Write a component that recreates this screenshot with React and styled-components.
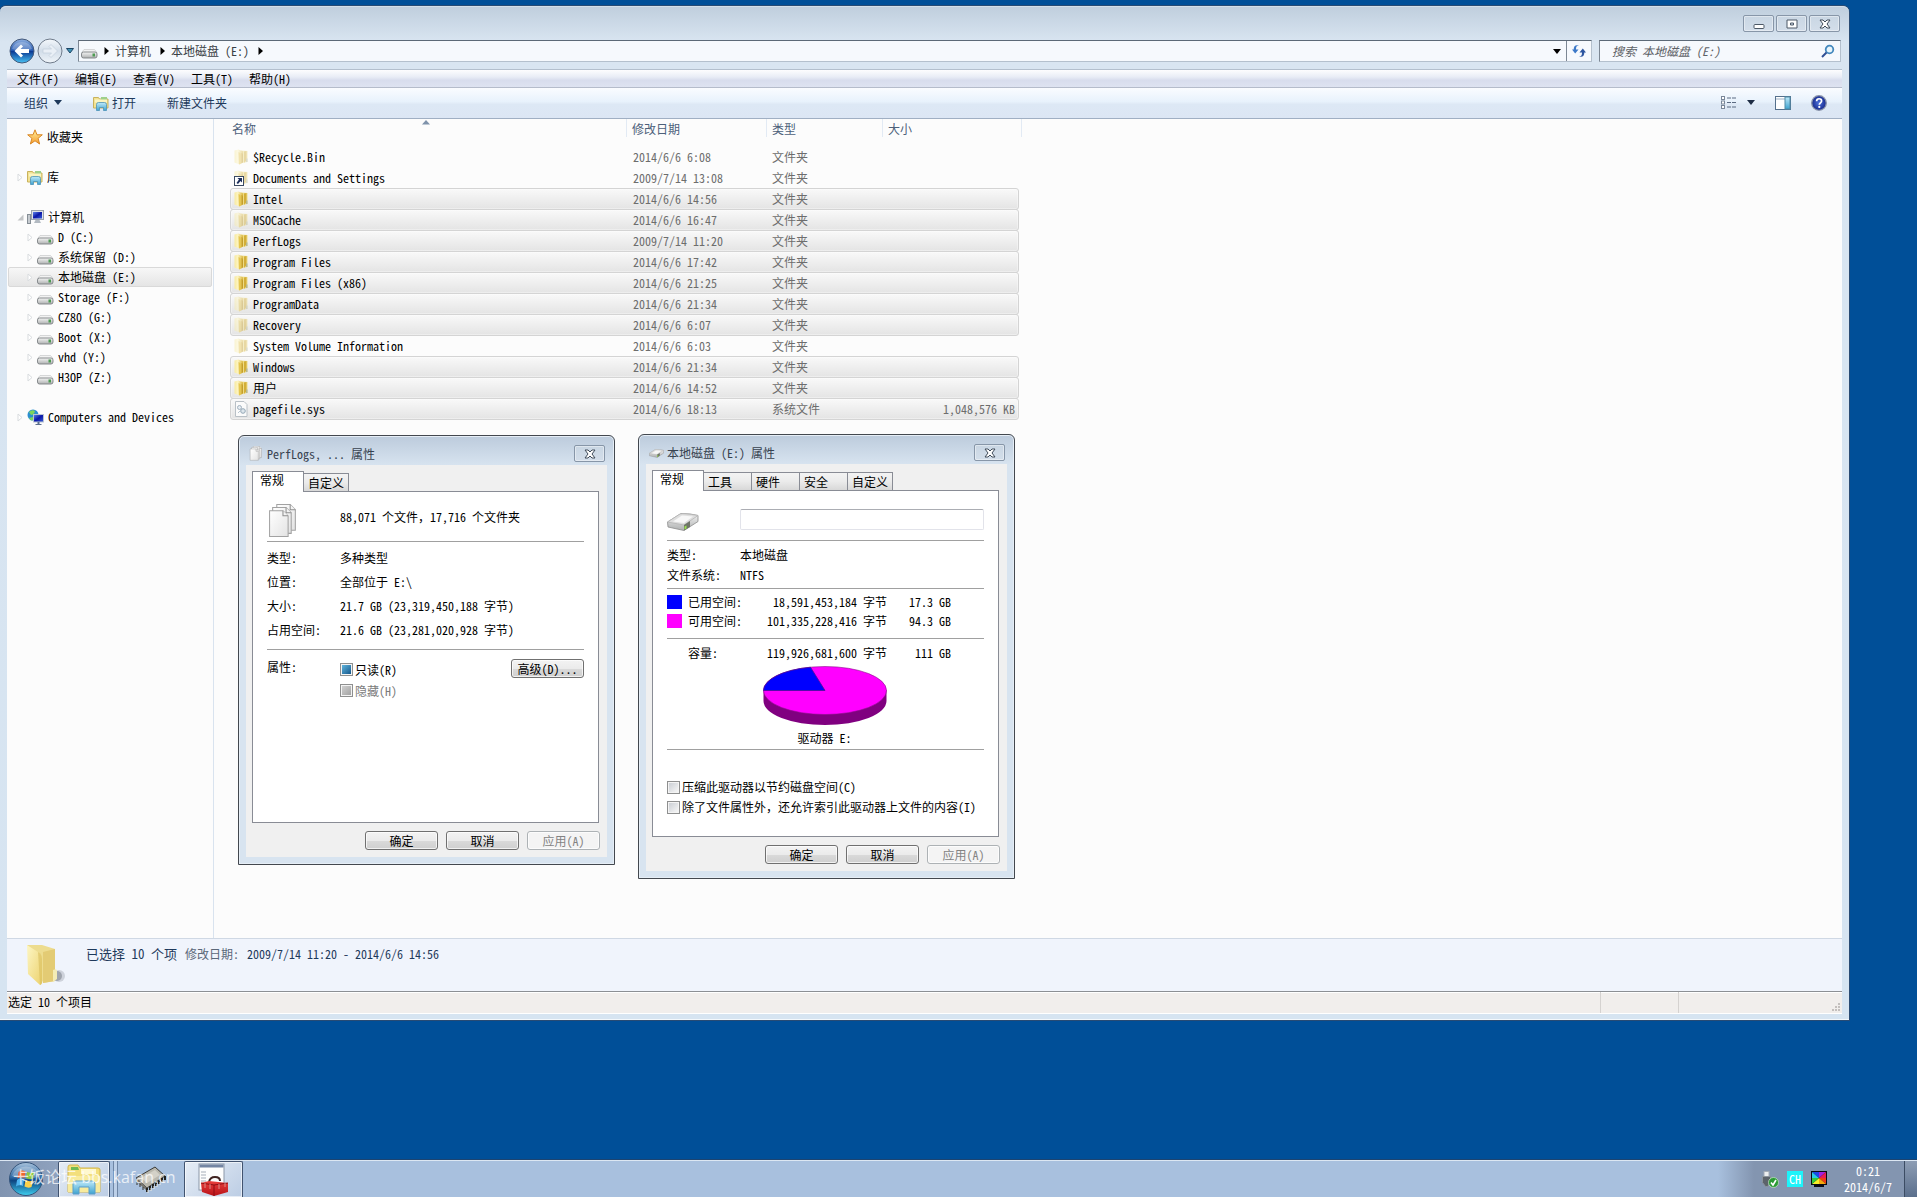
import React from 'react';
import styled, { createGlobalStyle, css } from 'styled-components';

const drives = [
  { name: 'D (C:)' },
  { name: '系统保留 (D:)' },
  { name: '本地磁盘 (E:)', active: true },
  { name: 'Storage (F:)' },
  { name: 'CZ80 (G:)' },
  { name: 'Boot (X:)' },
  { name: 'vhd (Y:)' },
  { name: 'H3OP (Z:)' },
];

const files = [
  { name: '$Recycle.Bin', date: '2014/6/6 6:08', type: '文件夹', icon: 'hidden' },
  { name: 'Documents and Settings', date: '2009/7/14 13:08', type: '文件夹', icon: 'shortcut' },
  { name: 'Intel', date: '2014/6/6 14:56', type: '文件夹', icon: 'folder', selected: true },
  { name: 'MSOCache', date: '2014/6/6 16:47', type: '文件夹', icon: 'hidden', selected: true },
  { name: 'PerfLogs', date: '2009/7/14 11:20', type: '文件夹', icon: 'folder', selected: true },
  { name: 'Program Files', date: '2014/6/6 17:42', type: '文件夹', icon: 'folder', selected: true },
  { name: 'Program Files (x86)', date: '2014/6/6 21:25', type: '文件夹', icon: 'folder', selected: true },
  { name: 'ProgramData', date: '2014/6/6 21:34', type: '文件夹', icon: 'hidden', selected: true },
  { name: 'Recovery', date: '2014/6/6 6:07', type: '文件夹', icon: 'hidden', selected: true },
  { name: 'System Volume Information', date: '2014/6/6 6:03', type: '文件夹', icon: 'hidden' },
  { name: 'Windows', date: '2014/6/6 21:34', type: '文件夹', icon: 'folder', selected: true },
  { name: '用户', date: '2014/6/6 14:52', type: '文件夹', icon: 'folder', selected: true },
  { name: 'pagefile.sys', date: '2014/6/6 18:13', type: '系统文件', size: '1,048,576 KB', icon: 'file', selected: true },
];

function App() {
  return (
    <Desktop>
      <GlobalStyle />
      <Gradients />
      <Explorer>
        <TitleBar>
          <CaptionButton aria-label="最小化"><MinimizeIcon /></CaptionButton>
          <CaptionButton aria-label="最大化"><MaximizeIcon /></CaptionButton>
          <CaptionButton aria-label="关闭"><CloseIcon /></CaptionButton>
        </TitleBar>
        <NavRow>
          <RoundButton aria-label="后退"><BackIcon /></RoundButton>
          <RoundButton aria-label="前进"><ForwardIcon /></RoundButton>
          <HistoryButton aria-label="最近浏览的位置">
            <svg width="8" height="6" viewBox="0 0 8 6"><path d="M0.5 0.5h7L4 5z" fill="#3f93b5" stroke="#1d4566" /></svg>
          </HistoryButton>
          <AddressBar>
            <DriveIcon low />
            <Crumbs>
              <ArrowRight />
              <Crumb>计算机</Crumb>
              <ArrowRight />
              <Crumb>本地磁盘 (E:)</Crumb>
              <ArrowRight />
            </Crumbs>
            <AddressButton aria-label="历史"><ArrowDown /></AddressButton>
            <AddressButton $divided aria-label="刷新"><RefreshIcon /></AddressButton>
          </AddressBar>
          <SearchBox>
            <SearchInput aria-label="搜索" placeholder="搜索 本地磁盘 (E:)" />
            <SearchIcon />
          </SearchBox>
        </NavRow>
        <MenuBar>
          <MenuItem>文件(F)</MenuItem>
          <MenuItem>编辑(E)</MenuItem>
          <MenuItem>查看(V)</MenuItem>
          <MenuItem>工具(T)</MenuItem>
          <MenuItem>帮助(H)</MenuItem>
        </MenuBar>
        <Toolbar>
          <ToolButton>组织<ArrowDown color="#1e395b" /></ToolButton>
          <ToolButton $tight><LibraryIcon />打开</ToolButton>
          <ToolButton>新建文件夹</ToolButton>
          <ToolSpacer />
          <IconButton aria-label="更改您的视图"><ViewsIcon /></IconButton>
          <IconButton aria-label="更多选项"><ArrowDown color="#1e2d45" /></IconButton>
          <IconButton $wide aria-label="显示预览窗格"><PreviewIcon /></IconButton>
          <IconButton $wide aria-label="获取帮助"><HelpIcon /></IconButton>
        </Toolbar>
        <Body>
          <Sidebar>
            <TreeGroup>
              <TreeItem><Expander /><StarIcon />收藏夹</TreeItem>
            </TreeGroup>
            <TreeGroup>
              <TreeItem><Expander><ClosedMark /></Expander><LibraryIcon />库</TreeItem>
            </TreeGroup>
            <TreeGroup>
              <TreeItem><Expander><OpenMark /></Expander><ComputerIcon />计算机</TreeItem>
              {drives.map((drive) => (
                <TreeItem key={drive.name} $child $active={drive.active}>
                  <Expander><ClosedMark /></Expander><DriveIcon low />{drive.name}
                </TreeItem>
              ))}
            </TreeGroup>
            <TreeGroup>
              <TreeItem><Expander><ClosedMark /></Expander><NetworkIcon />Computers and Devices</TreeItem>
            </TreeGroup>
          </Sidebar>
          <FilePane>
            <FileTable>
              <thead>
                <HeadRow>
                  <HeadCell $first>名称<SortMark><svg width="8" height="5" viewBox="0 0 8 5"><path d="M4 0l4 4.5H0z" fill="#7f93ab" /></svg></SortMark></HeadCell>
                  <HeadCell>修改日期</HeadCell>
                  <HeadCell>类型</HeadCell>
                  <HeadCell>大小</HeadCell>
                </HeadRow>
              </thead>
              <tbody>
                {files.map((file) => (
                  <FileRow key={file.name} $selected={file.selected}>
                    <NameCell><FileIcon kind={file.icon} />{file.name}</NameCell>
                    <Cell>{file.date}</Cell>
                    <Cell>{file.type}</Cell>
                    <SizeCell>{file.size}</SizeCell>
                  </FileRow>
                ))}
              </tbody>
            </FileTable>
          </FilePane>
        </Body>
        <DetailsPane>
          <BigFolderIcon />
          <Details>
            <Selected>已选择 10 个项</Selected>
            <Muted>修改日期:</Muted>
            <span>2009/7/14 11:20 - 2014/6/6 14:56</span>
          </Details>
        </DetailsPane>
        <StatusBar>
          <StatusText>选定 10 个项目</StatusText>
          <StatusCell $width="78px" />
          <StatusCell $width="164px"><GripIcon /></StatusCell>
        </StatusBar>
      </Explorer>
      <FolderProperties />
      <DriveProperties />
      <Taskbar />
    </Desktop>
  );
}

function Dialog({ left, top, icon, title, tabs, minHeight, children }) {
  return (
    <DialogFrame $left={left} $top={top}>
      <DialogTitle>
        {icon}
        <span>{title}</span>
        <CaptionButton aria-label="关闭"><CloseIcon /></CaptionButton>
      </DialogTitle>
      <Client>
        <Tabs>
          {tabs.map((tab, i) => <Tab key={tab} $active={i === 0}>{tab}</Tab>)}
        </Tabs>
        <Panel $minHeight={minHeight}>{children}</Panel>
        <DialogFooter>
          <Button>确定</Button>
          <Button>取消</Button>
          <Button disabled>应用(A)</Button>
        </DialogFooter>
      </Client>
    </DialogFrame>
  );
}

function FolderProperties() {
  return (
    <Dialog left="238px" top="435px" icon={<PagesIcon size={15} />} title="PerfLogs, ... 属性" tabs={['常规', '自定义']} minHeight="332px">
      <Head>
        <LabelCol $icon><PagesIcon size={34} /></LabelCol>
        <span>88,071 个文件，17,716 个文件夹</span>
      </Head>
      <Divider $after="4px" />
      <Field $height="24px"><LabelCol>类型:</LabelCol>多种类型</Field>
      <Field $height="24px"><LabelCol>位置:</LabelCol>全部位于 E:\</Field>
      <Field $height="24px"><LabelCol>大小:</LabelCol>21.7 GB (23,319,450,188 字节)</Field>
      <Field $height="24px"><LabelCol>占用空间:</LabelCol>21.6 GB (23,281,020,928 字节)</Field>
      <Divider $before="7px" $after="9px" />
      <Attributes>
        <LabelCol>属性:</LabelCol>
        <Checks>
          <CheckLabel><CheckBox $fill="blue" defaultChecked />只读(R)</CheckLabel>
          <CheckLabel $disabled><CheckBox $fill="grey" disabled defaultChecked />隐藏(H)</CheckLabel>
        </Checks>
        <Button>高级(D)...</Button>
      </Attributes>
    </Dialog>
  );
}

function DriveProperties() {
  return (
    <Dialog left="638px" top="434px" icon={<BigDriveIcon size={15} />} title="本地磁盘 (E:) 属性" tabs={['常规', '工具', '硬件', '安全', '自定义']} minHeight="347px">
      <Head>
        <LabelCol $icon><BigDriveIcon size={32} /></LabelCol>
        <VolumeName aria-label="卷标" />
      </Head>
      <Divider $after="4px" />
      <Field $height="20px"><LabelCol>类型:</LabelCol>本地磁盘</Field>
      <Field $height="20px"><LabelCol>文件系统:</LabelCol>NTFS</Field>
      <Divider $before="3px" $after="3px" />
      <Usage>
        <Swatch $color="#0000ff" /><span>已用空间:</span><Amount>18,591,453,184 字节</Amount><Amount>17.3 GB</Amount>
      </Usage>
      <Usage>
        <Swatch $color="#ff00ff" /><span>可用空间:</span><Amount>101,335,228,416 字节</Amount><Amount>94.3 GB</Amount>
      </Usage>
      <Divider $before="8px" $after="4px" />
      <Usage>
        <span /><span>容量:</span><Amount>119,926,681,600 字节</Amount><Amount>111 GB</Amount>
      </Usage>
      <Chart>
        <svg width="124" height="60" viewBox="0 0 124 60">
          <path d="M0.5 24v11a61.5 24 0 0 0 123 0V24z" fill="#800080" />
          <ellipse cx="62" cy="24.5" rx="61.5" ry="24" fill="#ff00ff" stroke="#8a108a" strokeWidth="0.6" />
          <path d="M62 24.5H0.5A61.5 24 0 0 1 47.5 1.2z" fill="#0000ff" stroke="#4b1093" strokeWidth="0.8" />
        </svg>
        <span>驱动器 E:</span>
      </Chart>
      <Divider $before="3px" $after="27px" />
      <CheckLabel $short><CheckBox />压缩此驱动器以节约磁盘空间(C)</CheckLabel>
      <CheckLabel $short><CheckBox />除了文件属性外，还允许索引此驱动器上文件的内容(I)</CheckLabel>
    </Dialog>
  );
}

function Taskbar() {
  return (
    <Bar>
      <StartButton aria-label="开始"><StartIcon /></StartButton>
      <TaskButton $active $width="52px" aria-label="Windows 资源管理器"><TaskExplorerIcon /></TaskButton>
      <TaskDivider />
      <TaskButton $width="66px" aria-label="内存工具"><ChipIcon /></TaskButton>
      <TaskButton $active $width="59px" aria-label="工具箱"><ToolboxIcon /></TaskButton>
      <Tray>
        <UsbIcon />
        <InputLang>CH</InputLang>
        <ColorIcon />
        <Clock>
          <span>0:21</span>
          <span>2014/6/7</span>
        </Clock>
        <ShowDesktop aria-label="显示桌面" />
      </Tray>
      <Watermark>卡饭论坛 bbs.kafan.cn</Watermark>
    </Bar>
  );
}

/* icons */

// shared fills, referenced by id from the icons below
const Gradients = () => (
  <Defs width="0" height="0" aria-hidden="true">
    <defs>
      <linearGradient id="gFolder" x1="0" x2="1"><stop offset="0" stopColor="#f7e9a0" /><stop offset="0.4" stopColor="#fdf5c2" /><stop offset="1" stopColor="#d9b53c" /></linearGradient>
      <linearGradient id="gFolderBig" x1="0" x2="1" y2="1"><stop offset="0" stopColor="#fdf6c4" /><stop offset="1" stopColor="#ecd26e" /></linearGradient>
      <linearGradient id="gMetal" x2="0" y2="1"><stop offset="0" stopColor="#f5f5f5" /><stop offset="1" stopColor="#aeb0b0" /></linearGradient>
      <linearGradient id="gPage" x1="0" x2="1" y2="1"><stop offset="0" stopColor="#ffffff" /><stop offset="1" stopColor="#e3e3e3" /></linearGradient>
      <linearGradient id="gScreen" x1="0" x2="1" y2="1"><stop offset="0" stopColor="#5f86ea" /><stop offset="0.5" stopColor="#0a16a8" /><stop offset="1" stopColor="#3a5fd6" /></linearGradient>
      <linearGradient id="gStar" x2="0" y2="1"><stop offset="0" stopColor="#fff3a0" /><stop offset="1" stopColor="#f59a2c" /></linearGradient>
      <linearGradient id="gTeal" x2="0" y2="1"><stop offset="0" stopColor="#bfeafa" /><stop offset="1" stopColor="#3fa3cf" /></linearGradient>
      <linearGradient id="gBack" x2="0" y2="1"><stop offset="0" stopColor="#8fb0e0" /><stop offset="0.48" stopColor="#2458b0" /><stop offset="0.52" stopColor="#0b3a94" /><stop offset="1" stopColor="#49c3f5" /></linearGradient>
      <linearGradient id="gForward" x2="0" y2="1"><stop offset="0" stopColor="#f4f8fc" /><stop offset="0.5" stopColor="#d2dde9" /><stop offset="1" stopColor="#f0f5fa" /></linearGradient>
      <radialGradient id="gHelp"><stop offset="0" stopColor="#4e72dc" /><stop offset="1" stopColor="#16298c" /></radialGradient>
      <linearGradient id="gOrb" x2="0" y2="1"><stop offset="0" stopColor="#a9c3dc" /><stop offset="0.45" stopColor="#2f6aa5" /><stop offset="0.55" stopColor="#0d4480" /><stop offset="1" stopColor="#3fd0f0" /></linearGradient>
      <linearGradient id="gRed" x2="0" y2="1"><stop offset="0" stopColor="#e8403c" /><stop offset="1" stopColor="#b81218" /></linearGradient>
    </defs>
  </Defs>
);

const ArrowRight = () => <svg width="5" height="8" viewBox="0 0 5 8"><path d="M0.5 0L5 4L0.5 8z" fill="#000" /></svg>;
const ArrowDown = ({ color = '#000' }) => <svg width="8" height="5" viewBox="0 0 8 5"><path d="M0 0h8L4 5z" fill={color} /></svg>;
const ClosedMark = () => <svg width="6" height="9" viewBox="0 0 6 9"><path d="M1 1l4 3.5L1 8z" fill="#fff" stroke="#d9dcdf" /></svg>;
const OpenMark = () => <svg width="7" height="7" viewBox="0 0 7 7"><path d="M6.5 0.5v6h-6z" fill="#c4c6c8" /></svg>;

const MinimizeIcon = () => <svg width="12" height="12" viewBox="0 0 12 12"><rect x="1" y="6.5" width="10" height="4" rx="1" fill="#fff" stroke="#4d5967" /></svg>;
const MaximizeIcon = () => <svg width="12" height="12" viewBox="0 0 12 12"><path fillRule="evenodd" d="M1 2h10v8H1zM4.5 5h3v2h-3z" fill="#fff" stroke="#4d5967" /></svg>;
const CloseIcon = () => <svg width="12" height="12" viewBox="0 0 12 12"><path d="M1 2h3l2 2l2-2h3L8 6l3 4H8L6 8l-2 2H1l3-4z" fill="#fff" stroke="#404c5a" strokeLinejoin="round" /></svg>;

const BackIcon = () => (
  <svg width="26" height="26" viewBox="0 0 26 26">
    <circle cx="13" cy="13" r="12" fill="url(#gBack)" stroke="#44597a" />
    <path d="M3 11a10.5 10 0 0 1 20 0c-6 2-14 2-20 0z" fill="#fff" opacity="0.25" />
    <path d="M5.500 13l6.500-6.500l2 2L11.500 11H20v4h-8.500l2.500 2.500l-2 2z" fill="#fff" />
  </svg>
);
const ForwardIcon = () => (
  <svg width="26" height="26" viewBox="0 0 26 26">
    <circle cx="13" cy="13" r="12" fill="url(#gForward)" stroke="#6f7b8b" />
    <path d="M20.5 13L14 6.5l-2 2l2.5 2.5H6v4h8.500L12 17.5l2 2z" fill="#e9eff6" stroke="#c3cedb" strokeWidth="0.7" />
  </svg>
);
const RefreshIcon = () => (
  <svg width="14" height="14" viewBox="0 0 14 14">
    <path d="M7 1.5C4.5 1.5 4 3 4 5.5H6.5L3.2 9.5L0 5.5h1.700C1.700 2 3.500 0.5 7 1.5z" fill="#3b78c8" />
    <path d="M7 12.5c2.500 0 3-1.500 3-4H7.500l3.300-4L14 8.500h-1.700c0 3.500-1.800 5-5.300 4z" fill="#2c55a0" />
  </svg>
);
const SearchIcon = () => <svg width="14" height="14" viewBox="0 0 14 14"><circle cx="8.500" cy="5.500" r="3.800" fill="#e8f5fb" stroke="#4388bd" strokeWidth="1.800" /><path d="M5.500 8.500L1 13" stroke="#2f4f94" strokeWidth="2" /></svg>;
const ViewsIcon = () => (
  <svg width="16" height="13" viewBox="0 0 16 13">
    {[0, 4.5, 9].map((y) => <g key={y}><rect x="0.5" y={y + 0.5} width="3" height="3" fill="#fff" stroke="#7a8799" /><path d={`M6 ${y + 2}h4M11 ${y + 2}h4`} stroke="#5b6a82" /></g>)}
  </svg>
);
const PreviewIcon = () => <svg width="16" height="14" viewBox="0 0 16 14"><rect x="0.5" y="0.5" width="15" height="13" fill="#fff" stroke="#55708c" /><path d="M1 3h9" stroke="#9bb0c4" /><rect x="10" y="1" width="5" height="12" fill="url(#gTeal)" stroke="#4e8ca8" /></svg>;
const HelpIcon = () => <svg width="16" height="16" viewBox="0 0 16 16"><circle cx="8" cy="8" r="7.3" fill="url(#gHelp)" stroke="#8a94ab" strokeWidth="1.3" /><path d="M5.600 6.200c0-3.200 5-3.200 5-0.300c0 1.900-2.300 1.900-2.300 3.900" stroke="#fff" strokeWidth="1.7" fill="none" /><circle cx="8.3" cy="11.9" r="1.1" fill="#fff" /></svg>;

const StarIcon = () => <svg width="16" height="16" viewBox="0 0 16 16"><path d="M8 0.8l2 5h5.3l-4.2 3.5l1.5 5.7L8 11.8L3.400 15l1.500-5.700L0.700 5.8H6z" fill="url(#gStar)" stroke="#d98724" strokeLinejoin="round" /></svg>;
const LibraryIcon = () => (
  <svg width="16" height="16" viewBox="0 0 16 16">
    <path d="M0.5 13V2.5h5l1 1.5h8.500v9z" fill="#f2e293" stroke="#c9b25c" />
    <path d="M8 2h6v4H8z" fill="#9fd08a" />
    <path d="M2 4.5h12v3H2z" fill="#fbf4c0" />
    <path d="M3.5 15.5V9.5q0-2 2-2h6q2 0 2 2v6h-3v-3h-4v3z" fill="url(#gTeal)" stroke="#4c93b8" strokeWidth="0.8" />
  </svg>
);
const ComputerIcon = () => (
  <svg width="17" height="16" viewBox="0 0 17 16">
    <rect x="0.5" y="5.5" width="3" height="9" fill="#c6cbd0" stroke="#868e96" />
    <rect x="4.5" y="1.5" width="12" height="9" fill="#dfe3e8" stroke="#9aa3ad" />
    <rect x="6" y="3" width="9" height="6.5" fill="url(#gScreen)" />
    <path d="M8.5 11h4l1.500 3H7z" fill="#b3bac2" />
  </svg>
);
const NetworkIcon = () => (
  <svg width="17" height="16" viewBox="0 0 17 16">
    <circle cx="6" cy="6" r="5.5" fill="#2b8fd0" />
    <path d="M2 3q3-3 6-1q-1 4-4 4zM2 9l4-1l1 3l-3 0.500z" fill="#7ed65c" />
    <rect x="6.5" y="5.5" width="10" height="7.5" fill="url(#gScreen)" stroke="#b9c4d2" />
    <path d="M10.5 13h2v2h2v1h-6v-1h2z" fill="#5c6f8c" />
  </svg>
);
const DriveIcon = ({ low }) => (
  <svg width="17" height="16" viewBox="0 0 17 16">
    <g transform={low ? 'translate(0 1)' : 'translate(0 0)'}>
      <path d="M3 5.5h10.5l2.5 3H0.700z" fill="#f2f2f2" stroke="#c7c9ca" strokeWidth="0.7" />
      <rect x="0.5" y="8" width="15.5" height="6" rx="2" fill="url(#gMetal)" stroke="#7d8184" strokeWidth="0.9" />
      <rect x="11.5" y="9.5" width="2.500" height="3" fill="#4d9b52" />
    </g>
  </svg>
);

const Folder = () => (
  <>
    <path d="M7 1.500l6.500 0.500v11l-6 1z" fill="#eedb85" />
    <path d="M10 2.500l2.500-0.500v9l-2.500 3z" fill="#d2ae38" />
    <path d="M0.500 1.500l4-1l4.500 2v11l-3.500 2l-5-2z" fill="url(#gFolder)" />
    <path d="M4.500 3q2.500 0.500 2.500 2.500v9l-2 1z" fill="#e6c750" />
    <path d="M7.500 4q1.500 0 1.500 2v7l-1.500 1.500z" fill="#c49e2a" />
    <rect x="12" y="9.500" width="1.500" height="3.500" fill="#b4b796" />
  </>
);
function FileIcon({ kind }) {
  if (kind === 'file') {
    return (
      <svg width="16" height="16" viewBox="0 0 16 16">
        <path d="M1.5 0.5h8.500l3 3v12h-11.500z" fill="#fbfbfb" stroke="#b9c0c6" />
        <circle cx="5.5" cy="6.5" r="2" fill="#e6ecf1" stroke="#a2b2bf" />
        <circle cx="9" cy="10" r="2.3" fill="#dde6ec" stroke="#94a7b6" />
        <path d="M4 12l2-2" stroke="#b8c6d0" />
      </svg>
    );
  }
  return (
    <svg width="16" height="16" viewBox="0 0 16 16">
      <g opacity={kind === 'folder' ? 1 : 0.45}><Folder /></g>
      {kind === 'shortcut' && (
        <g>
          <rect x="0.5" y="6.5" width="9" height="9" fill="#fff" stroke="#3d4c63" />
          <path d="M3.500 8h4.500v4.500L6.500 11L4 14l-1.500-1l2.500-3.500z" fill="#1d2f5c" />
        </g>
      )}
    </svg>
  );
}
const BigFolderIcon = () => (
  <svg width="40" height="44" viewBox="0 0 40 44">
    <ellipse cx="33" cy="32" rx="6" ry="6" fill="#9ba1ab" opacity="0.4" />
    <ellipse cx="31" cy="32" rx="5" ry="5" fill="#6f757f" opacity="0.5" />
    <path d="M1 1h15l13 4v32l-12 2z" fill="#eddc8f" />
    <path d="M17 8l12-3v32l-12 2z" fill="#e3cb74" />
    <path d="M1 1l11 7q4 2 4 7v24q-1 2-2 2L2 30z" fill="url(#gFolderBig)" />
    <path d="M12 8q4 2 4 7v24q-1 2-2 2z" fill="#d9be5e" opacity="0.6" />
    <path d="M27 26q4-2 4 1v8l-4 3z" fill="#f4ecb4" />
  </svg>
);
const GripIcon = () => <svg width="9" height="9" viewBox="0 0 9 9"><path d="M6 0h2v2h-2zM3 3h2v2h-2zM6 3h2v2h-2zM0 6h2v2h-2zM3 6h2v2h-2zM6 6h2v2h-2z" fill="#c3bfbd" /></svg>;

const PagesIcon = ({ size }) => (
  <svg width={size} height={size} viewBox="0 0 33 33">
    {[[9, 0], [5, 3], [2, 6]].map(([x, y]) => (
      <g key={x} transform={`translate(${x} ${y})`}>
        <path d="M0.5 0.5h13l5 5v20h-18z" fill="url(#gPage)" stroke="#a2a2a2" />
        <path d="M13.5 0.5v5h5" fill="#f4f4f4" stroke="#8f8f8f" />
      </g>
    ))}
  </svg>
);
const BigDriveIcon = ({ size }) => (
  <svg width={size} height={size} viewBox="0 0 32 32">
    <path d="M0.500 18L14 9.500q10 0 17 2v6L17 26.500L1 23z" fill="url(#gMetal)" stroke="#8b8b8b" strokeWidth="0.8" />
    <path d="M0.500 18L13 10q3-1 18 1.500L17 21z" fill="#dedede" stroke="#b5b5b5" strokeWidth="0.8" />
    <path d="M6 17.500l9-6l11 1l-9 6.500z" fill="#f7f7f7" />
    <path d="M17 21v5.500l6-3.500v-6z" fill="#6e7468" />
    <path d="M17.500 22.500v3l2-1v-3z" fill="#9be24e" />
  </svg>
);

const StartIcon = () => (
  <svg width="36" height="36" viewBox="0 0 36 36">
    <circle cx="18" cy="18" r="16.5" fill="url(#gOrb)" stroke="#35557c" />
    <path d="M4 15a14.5 13 0 0 1 28 0q-14 6-28 0z" fill="#fff" opacity="0.25" />
    <path d="M10.5 11q3-2.500 7-0.500l-1 6.500q-4-1.500-7 0.500z" fill="#f0642e" />
    <path d="M19 11q3.500 1.500 7.500 0l-1.500 6.500q-3.500 1.500-7-0.500z" fill="#8fc93f" />
    <path d="M9 19q3-2.500 7-0.500l-1 6.500q-4-1.500-7 0.500z" fill="#4cb2ee" />
    <path d="M17.5 19q3.500 2 7.500 0.500L23.500 26q-3.500 1.500-7-0.500z" fill="#fbd04a" />
  </svg>
);
const TaskExplorerIcon = () => (
  <svg width="34" height="32" viewBox="0 0 34 32">
    <path d="M1 28V3q0-2 2-2h8l2 3h18q2 0 2 2v22z" fill="#f3df7c" stroke="#d2b54b" />
    <path d="M4 3h7l1 3h-8z" fill="#6fba54" />
    <path d="M14 5h15v5H14z" fill="#fff8cf" />
    <path d="M1 12h32v16H1z" fill="#f8eb9d" />
    <path d="M6 30V20q0-3 3-3h16q3 0 3 3v10h-6v-7h-10v7z" fill="url(#gTeal)" stroke="#5a9dca" />
  </svg>
);
const ChipIcon = () => (
  <svg width="32" height="28" viewBox="0 0 32 28">
    <path d="M1 13L20 2l10 9L12 23z" fill="#b9b7ad" stroke="#3b3b38" />
    <path d="M1 13v3l11 10v-3z" fill="#77756e" />
    <path d="M6 13L20 5l5 5l-13 8z" fill="#d3d1c8" />
    <path d="M12 23v4M15 21v4M18 19v4M21 17v4M24 15v4M27 13v4M30 11v4" stroke="#22221f" strokeWidth="2" />
    <path d="M13 25v3M16 23v3M19 21v3M22 19v3M25 17v3M28 15v3" stroke="#e9e9e2" />
    <path d="M2 17v3M5 19v3M8 22v3" stroke="#33332f" />
  </svg>
);
const ToolboxIcon = () => (
  <svg width="32" height="34" viewBox="0 0 32 34">
    <rect x="1" y="1" width="25" height="26" fill="#fdfdfd" stroke="#8b97a8" />
    <path d="M1.5 3h24" stroke="#7385a3" strokeWidth="3" />
    <path d="M3 9h5M3 12h5M3 15h5M3 18h5" stroke="#a5adb8" />
    <path d="M11 19q1-5 6-5t5 4" fill="none" stroke="#3f2320" strokeWidth="2" />
    <path d="M3 20l8-2l19 2v9l-14 4l-12-4z" fill="url(#gRed)" />
    <path d="M3 20l13 2l14-2M16 22v11" stroke="#8e0d12" fill="none" />
    <path d="M7 20v5M12 21v5M21 21v5M27 20v4" stroke="#d98d89" />
  </svg>
);
const UsbIcon = () => (
  <svg width="17" height="17" viewBox="0 0 17 17">
    <rect x="2" y="0.5" width="5" height="5" fill="#eceef0" stroke="#a4acb5" />
    <path d="M0.5 5.5h8v6l-3 4h-2l-3-4z" fill="#5c636b" stroke="#8b939b" />
    <circle cx="11.5" cy="11.5" r="5" fill="#2a9b34" stroke="#bfe0bf" strokeWidth="0.8" />
    <path d="M9 11.5l2 2.500l3-5" stroke="#fff" strokeWidth="1.6" fill="none" />
  </svg>
);
const ColorIcon = () => (
  <svg width="16" height="16" viewBox="0 0 16 16">
    <path d="M0 0h16v14H0zM3 14h10v2H3z" fill="#0a0a14" />
    <path d="M8 7V1H1z" fill="#1d49e8" /><path d="M8 7V1h7z" fill="#a020e0" />
    <path d="M8 7l7-6v6z" fill="#e81c54" /><path d="M8 7h7v6z" fill="#f03a16" />
    <path d="M8 7l7 6H8z" fill="#f5a80c" /><path d="M8 7v6H1z" fill="#f6ee28" />
    <path d="M8 7l-7 6V7z" fill="#33c93c" /><path d="M8 7H1V1z" fill="#27c9e8" />
  </svg>
);

/* styles */

const GlobalStyle = createGlobalStyle`
  * {
    box-sizing: border-box;
  }
  body {
    margin: 0;
    background: #004f98;
  }
  body, button, input {
    font-family: 'Noto Sans Mono CJK SC', 'Noto Sans CJK SC', 'Liberation Mono', monospace;
    font-size: 12px;
    line-height: 16px;
    color: #000;
  }
  button {
    margin: 0;
    padding: 0;
    border: none;
    background: none;
    white-space: nowrap;
  }
  svg {
    display: block;
    flex-shrink: 0;
  }
`;

const Defs = styled.svg`
  position: absolute;
`;

const Desktop = styled.div`
  position: relative;
  display: flex;
  flex-direction: column;
  min-height: 100vh;
  padding-top: 6px;
  background: #004f98;
  overflow: hidden;
`;

const Explorer = styled.main`
  flex: 1;
  display: flex;
  flex-direction: column;
  margin: 0 68px 140px 0;
  padding-bottom: 6px;
  border-radius: 6px 6px 0 0;
  background: linear-gradient(#bfcedd, #d9e5f1 36px, #d6e4f1);
  box-shadow: 0 0 0 1px #284b74, inset 0 -1px 0 #f3f8fc, inset 0 1px 0 #d4dfe9;
`;

const TitleBar = styled.header`
  display: flex;
  justify-content: flex-end;
  gap: 2px;
  height: 30px;
  padding: 9px 9px 0 0;
`;

const CaptionButton = styled.button`
  display: flex;
  align-items: center;
  justify-content: center;
  width: 31px;
  height: 17px;
  border: 1px solid #8796a8;
  border-radius: 2px;
  background: linear-gradient(#c9d6e3, #d3deea);
  box-shadow: inset 0 0 0 1px rgba(255, 255, 255, 0.4);
`;

const NavRow = styled.div`
  display: flex;
  align-items: center;
  height: 33px;
  padding: 0 8px 3px 9px;
`;

const RoundButton = styled.button`
  margin-right: 2px;
`;

const HistoryButton = styled.button`
  margin: 0 4px 0 1px;
`;

const AddressBar = styled.div`
  flex: 1;
  display: flex;
  align-items: center;
  height: 22px;
  padding-left: 2px;
  border: 1px solid #b4c0cd;
  border-top-color: #5c6977;
  border-left-color: #7c8794;
  background: #f6f9fd;
`;

const Crumbs = styled.nav`
  flex: 1;
  display: flex;
  align-items: center;
  gap: 5px;
  padding-left: 6px;
`;

const Crumb = styled.button`
  padding: 0 4px 0 1px;
  line-height: 14px;
  color: #3a3f45;
`;

const AddressButton = styled.button`
  display: flex;
  align-items: center;
  justify-content: center;
  width: 18px;
  height: 20px;
  ${(props) => props.$divided && css`
    width: 25px;
    border-left: 1px solid #7c8794;
  `}
`;

const SearchBox = styled.label`
  display: flex;
  align-items: center;
  width: 242px;
  height: 22px;
  margin-left: 7px;
  padding: 0 5px 0 12px;
  border: 1px solid #b4c0cd;
  border-top-color: #5c6977;
  border-left-color: #7c8794;
  background: #f6f9fd;
`;

const SearchInput = styled.input`
  flex: 1;
  min-width: 0;
  padding: 0;
  border: none;
  outline: none;
  background: none;
  font-style: italic;
  &::placeholder {
    color: #5d6166;
    opacity: 1;
  }
`;

const MenuBar = styled.nav`
  display: flex;
  height: 19px;
  margin: 0 7px;
  padding-left: 2px;
  border-top: 1px solid #b3bfcd;
  border-bottom: 1px solid #b5bccb;
  background: linear-gradient(#fdfdfe, #e9edf6 40%, #d8dded 60%, #dee3f1);
`;

const MenuItem = styled.button`
  padding: 0 8px;
`;

const Toolbar = styled.div`
  display: flex;
  align-items: center;
  height: 31px;
  margin: 0 7px;
  padding: 0 15px 1px 9px;
  border-bottom: 1px solid #a0afc3;
  background: linear-gradient(#fafcff, #e8f2fc 45%, #dde8f5 55%, #dce6f4);
`;

const ToolButton = styled.button`
  display: flex;
  align-items: center;
  gap: ${(props) => (props.$tight ? '3px' : '6px')};
  padding: 0 ${(props) => (props.$tight ? '23px' : '8px')};
  color: #1e395b;
`;

const ToolSpacer = styled.div`
  flex: 1;
`;

const IconButton = styled.button`
  padding-left: ${(props) => (props.$wide ? '20px' : '10px')};
`;

const Body = styled.div`
  flex: 1;
  display: flex;
  margin: 0 7px;
  background: #fcfcfc;
`;

const Sidebar = styled.nav`
  display: flex;
  flex-direction: column;
  gap: 20px;
  width: 207px;
  padding: 8px 1px 0;
  border-right: 1px solid #d9e3ef;
`;

const TreeGroup = styled.div`
  display: flex;
  flex-direction: column;
`;

const TreeItem = styled.a.attrs({ href: '#' })`
  display: flex;
  align-items: center;
  height: 20px;
  padding-left: ${(props) => (props.$child ? '18px' : '8px')};
  border: 1px solid transparent;
  border-radius: 2px;
  color: #000;
  text-decoration: none;
  white-space: pre;
  span + svg {
    margin-right: 4px;
  }
  ${(props) => props.$active && css`
    border-color: #d9d9d9;
    background: linear-gradient(#f7f7f7, #e5e5e5);
  `}
`;

const Expander = styled.span`
  width: 10px;
`;

const FilePane = styled.section`
  flex: 1;
  padding-left: 16px;
`;

const FileTable = styled.table`
  display: block;
  width: 792px;
  thead, tbody {
    display: block;
  }
  tbody {
    padding: 6px 3px 0 0;
  }
`;

const HeadRow = styled.tr`
  display: grid;
  grid-template-columns: 397px 140px 116px 139px;
  height: 21px;
`;

const HeadCell = styled.th`
  position: relative;
  height: 18px;
  padding: 2px 0 0 ${(props) => (props.$first ? '2px' : '5px')};
  border-right: 1px solid #e2eaf4;
  color: #4c607a;
  font-weight: normal;
  text-align: left;
`;

const SortMark = styled.span`
  position: absolute;
  top: 1px;
  left: 192px;
`;

const FileRow = styled.tr`
  display: grid;
  grid-template-columns: 396px 139px 116px 1fr;
  align-items: center;
  height: 22px;
  margin-bottom: -1px;
  border: 1px solid transparent;
  border-radius: 3px;
  ${(props) => props.$selected && css`
    border-color: #d4d4d4;
    background: linear-gradient(#f9f9f9, #e4e4e4);
    box-shadow: inset 0 0 0 1px rgba(255, 255, 255, 0.35);
  `}
`;

const Cell = styled.td`
  padding: 0 0 0 6px;
  color: #6d6d6d;
  white-space: nowrap;
`;

const NameCell = styled(Cell)`
  display: flex;
  align-items: center;
  gap: 3px;
  padding-left: 3px;
  color: #000;
`;

const SizeCell = styled(Cell)`
  padding-right: 3px;
  text-align: right;
`;

const DetailsPane = styled.footer`
  display: flex;
  height: 53px;
  margin: 0 7px;
  padding: 5px 0 0 19px;
  gap: 20px;
  border-top: 1px solid #cfd8e4;
  background: #f0f4fc;
`;

const Details = styled.div`
  display: flex;
  gap: 8px;
  padding-top: 2px;
  color: #1e395b;
`;

const Selected = styled.span`
  font-size: 13px;
`;

const Muted = styled.span`
  color: #5a6779;
`;

const StatusBar = styled.div`
  display: flex;
  height: 23px;
  margin: 0 7px;
  border-top: 1px solid #8c8f94;
  border-bottom: 1px solid #fff;
  background: #f1eeec;
  box-shadow: inset 0 1px 0 #fff;
`;

const StatusText = styled.span`
  flex: 1;
  padding: 2px 0 0 1px;
`;

const StatusCell = styled.span`
  display: flex;
  align-items: flex-end;
  justify-content: flex-end;
  width: ${(props) => props.$width};
  padding: 0 1px 1px 0;
  border-left: 1px solid #d5d2d0;
`;

const DialogFrame = styled.section`
  position: absolute;
  left: ${(props) => props.$left};
  top: ${(props) => props.$top};
  width: 377px;
  padding: 0 7px 7px;
  border: 1px solid #43484f;
  border-radius: 6px 6px 0 0;
  background: linear-gradient(#bccbdc, #d8e4f0 30px, #d8e4f0);
  box-shadow: inset 0 0 0 1px #e6eef6;
`;

const DialogTitle = styled.header`
  display: flex;
  align-items: center;
  gap: 3px;
  height: 29px;
  padding: 6px 2px 0 3px;
  color: #37424f;
  span {
    flex: 1;
  }
`;

const Client = styled.div`
  padding: 6px 7px 7px 6px;
  background: #f0f0f0;
`;

const Tabs = styled.div`
  display: flex;
  align-items: flex-end;
  height: 20px;
`;

const Tab = styled.button`
  min-width: 48px;
  height: 18px;
  padding: 0 4px;
  border: 1px solid #898c95;
  border-left: none;
  border-bottom: none;
  background: linear-gradient(#f3f3f3, #ebebeb 50%, #d8d8d8);
  text-align: left;
  &:last-child {
    min-width: 0;
  }
  ${(props) => props.$active && css`
    z-index: 1;
    width: 52px;
    height: 21px;
    margin-bottom: -1px;
    padding: 0 7px 4px;
    border-left: 1px solid #898c95;
    background: #fff;
  `}
`;

const Panel = styled.div`
  min-height: ${(props) => props.$minHeight};
  margin-right: 1px;
  padding: 0 14px;
  border: 1px solid #898c95;
  background: #fff;
`;

const DialogFooter = styled.footer`
  display: flex;
  justify-content: flex-end;
  gap: 8px;
  padding-top: 8px;
`;

const Button = styled.button`
  width: 73px;
  height: 19px;
  border: 1px solid #707070;
  border-radius: 3px;
  background: linear-gradient(#f3f3f3, #ebebeb 50%, #dadada 51%, #cfcfcf);
  box-shadow: inset 0 0 0 1px rgba(255, 255, 255, 0.7);
  line-height: 14px;
  &:disabled {
    border-color: #adb2b5;
    background: #f4f4f4;
    color: #838383;
  }
`;

const Head = styled.div`
  display: flex;
  align-items: center;
  height: 49px;
`;

const LabelCol = styled.div`
  width: 73px;
  flex-shrink: 0;
  padding-top: ${(props) => (props.$icon ? '8px' : '0')};
`;

const Divider = styled.hr`
  height: 1px;
  margin: ${(props) => props.$before || '0'} 0 ${(props) => props.$after || '0'};
  border: none;
  background: #a0a0a0;
`;

const Field = styled.div`
  display: flex;
  align-items: center;
  height: ${(props) => props.$height};
`;

const Attributes = styled.div`
  display: flex;
  align-items: flex-start;
`;

const Checks = styled.div`
  flex: 1;
`;

const CheckLabel = styled.label`
  display: flex;
  align-items: center;
  gap: 2px;
  height: ${(props) => (props.$short ? '20px' : '21px')};
  color: ${(props) => (props.$disabled ? '#7b7b7b' : '#000')};
  white-space: nowrap;
`;

const fills = {
  blue: 'linear-gradient(135deg, #5fb4dc, #14578c)',
  grey: 'linear-gradient(135deg, #cfcfcf, #a3a3a3)',
};

const CheckBox = styled.input.attrs({ type: 'checkbox' })`
  appearance: none;
  flex-shrink: 0;
  width: 13px;
  height: 13px;
  margin: 0;
  padding: 1px;
  border: 1px solid #8e8f8f;
  background: ${(props) => fills[props.$fill] || 'linear-gradient(135deg, #cbcfd5, #f6f6f6)'} content-box, #f4f4f4;
  box-shadow: inset 0 0 0 1px #f4f4f4;
`;

const VolumeName = styled.input`
  width: 246px;
  height: 21px;
  margin-top: 8px;
  border: 1px solid #e2e3ea;
  border-top-color: #abadb3;
  border-radius: 2px;
  background: #fff;
`;

const Usage = styled.div`
  display: grid;
  grid-template-columns: 21px 70px 129px 64px;
  align-items: center;
  height: 19px;
`;

const Swatch = styled.span`
  width: 15px;
  height: 14px;
  background: ${(props) => props.$color};
`;

const Amount = styled.span`
  text-align: right;
  white-space: nowrap;
`;

const Chart = styled.div`
  display: flex;
  flex-direction: column;
  align-items: center;
  gap: 4px;
  padding: 4px 2px 0 0;
`;

const Bar = styled.footer`
  position: relative;
  display: flex;
  height: 37px;
  border-top: 1px solid #dce7f3;
  background: #a8c0de;
  box-shadow: 0 -1px 0 #1d4470;
`;

const StartButton = styled.button`
  display: flex;
  align-items: center;
  justify-content: center;
  width: 58px;
  padding-right: 6px;
  background: linear-gradient(90deg, #8194b0, #8fa2be);
`;

const TaskButton = styled.button`
  display: flex;
  align-items: center;
  justify-content: center;
  width: ${(props) => props.$width};
  ${(props) => props.$active && css`
    border: 1px solid #41536f;
    border-bottom: none;
    border-radius: 2px 2px 0 0;
    background: linear-gradient(135deg, #e6edf6, #bccde4);
    box-shadow: inset 0 0 0 1px rgba(255, 255, 255, 0.6);
  `}
`;

const TaskDivider = styled.div`
  width: 5px;
  margin-left: 3px;
  border-left: 1px solid #6f86a5;
  border-right: 1px solid #6f86a5;
  background: #bdd0e8;
`;

const Tray = styled.div`
  display: flex;
  align-items: center;
  gap: 8px;
  margin-left: auto;
  padding-left: 44px;
  background: linear-gradient(90deg, #a8c0de, #8395b0 36px);
`;

const InputLang = styled.span`
  width: 16px;
  background: #1cf3fa;
  color: #fff;
  text-align: center;
`;

const Clock = styled.time`
  display: flex;
  flex-direction: column;
  margin: 0 4px 0 9px;
  color: #fff;
  text-align: center;
`;

const ShowDesktop = styled.button`
  align-self: stretch;
  width: 13px;
  border-left: 1px solid #3c4c63;
  background: linear-gradient(#8d9db4, #5b6f8c);
`;

const Watermark = styled.span`
  position: absolute;
  left: 13px;
  top: 5px;
  color: #fff;
  font-family: 'Open Sans', 'Noto Sans CJK SC', sans-serif;
  font-size: 16px;
  line-height: 22px;
  opacity: 0.75;
  pointer-events: none;
`;

export default App;
